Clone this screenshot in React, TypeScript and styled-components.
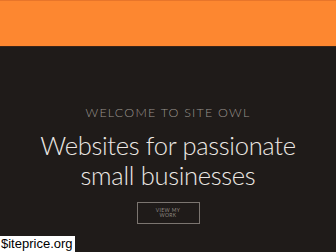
import styled, { createGlobalStyle } from 'styled-components';

const GlobalStyle = createGlobalStyle`
  html, body {
    margin: 0;
    padding: 0;
    background: #1f1b19;
  }
  #root {
    width: 336px;
    height: 252px;
    overflow: hidden;
  }
`;

const Page = styled.div`
  position: relative;
  display: flex;
  flex-direction: column;
  width: 336px;
  height: 252px;
  background-color: #1f1b19;
  font-family: Lato, 'Open Sans', sans-serif;
`;

const TopBar = styled.div`
  height: 47px;
  box-sizing: border-box;
  background-color: #fd8730;
  border-top: 1px solid #e8752a;
  border-bottom: 1px solid #3a2418;
`;

const Hero = styled.div`
  display: flex;
  flex-direction: column;
  align-items: center;
  padding-top: 59px;
`;

const Kicker = styled.div`
  color: #9b958f;
  font-size: 12.5px;
  font-weight: 300;
  letter-spacing: 1.2px;
  line-height: 14px;
  text-transform: uppercase;
`;

const Headline = styled.h1`
  margin: 10px 0 0;
  color: #ece8e4;
  font-size: 25.5px;
  font-weight: 300;
  line-height: 30px;
  text-align: center;
  letter-spacing: -0.3px;
`;

const Button = styled.div`
  margin-top: 12px;
  width: 63px;
  height: 22px;
  box-sizing: border-box;
  border: 1px solid #7b7570;
  display: flex;
  flex-direction: column;
  align-items: center;
  justify-content: center;
  color: #8f8983;
  font-size: 5px;
  line-height: 5px;
  letter-spacing: 0.4px;
  text-transform: uppercase;
`;

const Watermark = styled.div`
  position: absolute;
  left: 0;
  bottom: 0;
  height: 16px;
  padding: 0 2px 0 1px;
  background: #ffffff;
  color: #000000;
  font-family: 'Liberation Sans', Arial, sans-serif;
  font-size: 13px;
  line-height: 16px;
`;

export default function App() {
  return (
    <>
      <GlobalStyle />
      <Page>
        <TopBar />
        <Hero>
          <Kicker>Welcome to Site Owl</Kicker>
          <Headline>
            Websites for passionate
            <br />
            small businesses
          </Headline>
          <Button>
            <span>View my</span>
            <span>work</span>
          </Button>
        </Hero>
        <Watermark>$iteprice.org</Watermark>
      </Page>
    </>
  );
}
